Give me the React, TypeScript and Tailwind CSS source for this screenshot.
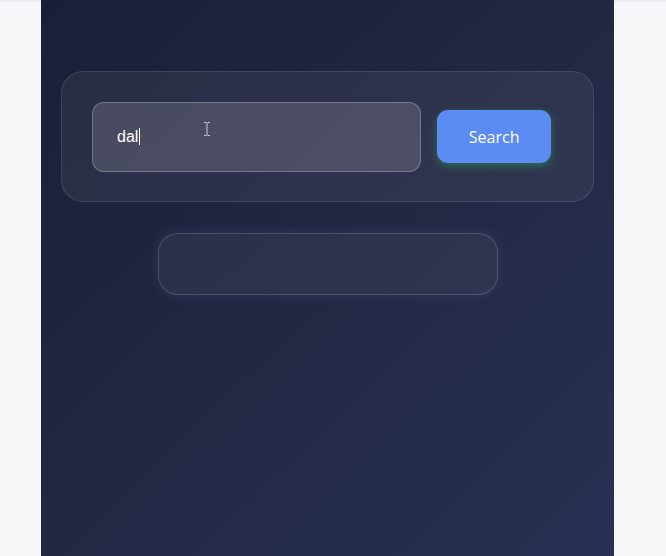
import React from "react";

export default function App() {
  return (
    <div className="w-[666px] h-[556px] bg-[#f7f8f9] flex justify-start overflow-hidden relative">
      <div className="absolute top-0 left-0 right-0 h-[3px] bg-gradient-to-b from-[#e4e7ec] to-[#f7f8f9]" />
      <div className="relative w-[573px] h-[556px] ml-[41px] bg-gradient-to-br from-[#1b1e38] via-[#232744] to-[#283152] px-[20px] pt-[71px] flex flex-col items-center">
        <div className="w-[533px] h-[131px] rounded-[22px] border border-white/10 bg-white/[0.06] pl-[30px] pr-[42px] py-[30px] flex items-center gap-[16px]">
          <div className="relative w-[330px] h-[70px] rounded-[12px] border border-white/25 bg-white/[0.14] flex items-center pl-[24px]">
            <span className="text-white text-[16px] font-['Liberation_Sans',sans-serif] leading-none">dal</span>
            <span className="w-[1px] h-[17px] bg-white ml-[1px]" />
            <svg className="absolute left-[110px] top-[18px]" width="8" height="16" viewBox="0 0 8 16">
              <path d="M1 1.5h2.5M4.5 1.5H7M4 2v12M1 14.5h2.5M4.5 14.5H7" stroke="#c8ccd8" strokeWidth="1" fill="none" />
            </svg>
          </div>
          <button className="w-[114px] h-[53px] rounded-[11px] bg-[#5a8cf1] text-white text-[16px] font-medium font-['Open_Sans',sans-serif] shadow-[0_3px_8px_rgba(40,160,90,0.55)]">
            Search
          </button>
        </div>
        <div className="mt-[31px] w-[340px] h-[62px] rounded-[20px] border border-white/15 bg-white/[0.05] shadow-[0_0_12px_rgba(120,140,220,0.18)]" />
      </div>
    </div>
  );
}
